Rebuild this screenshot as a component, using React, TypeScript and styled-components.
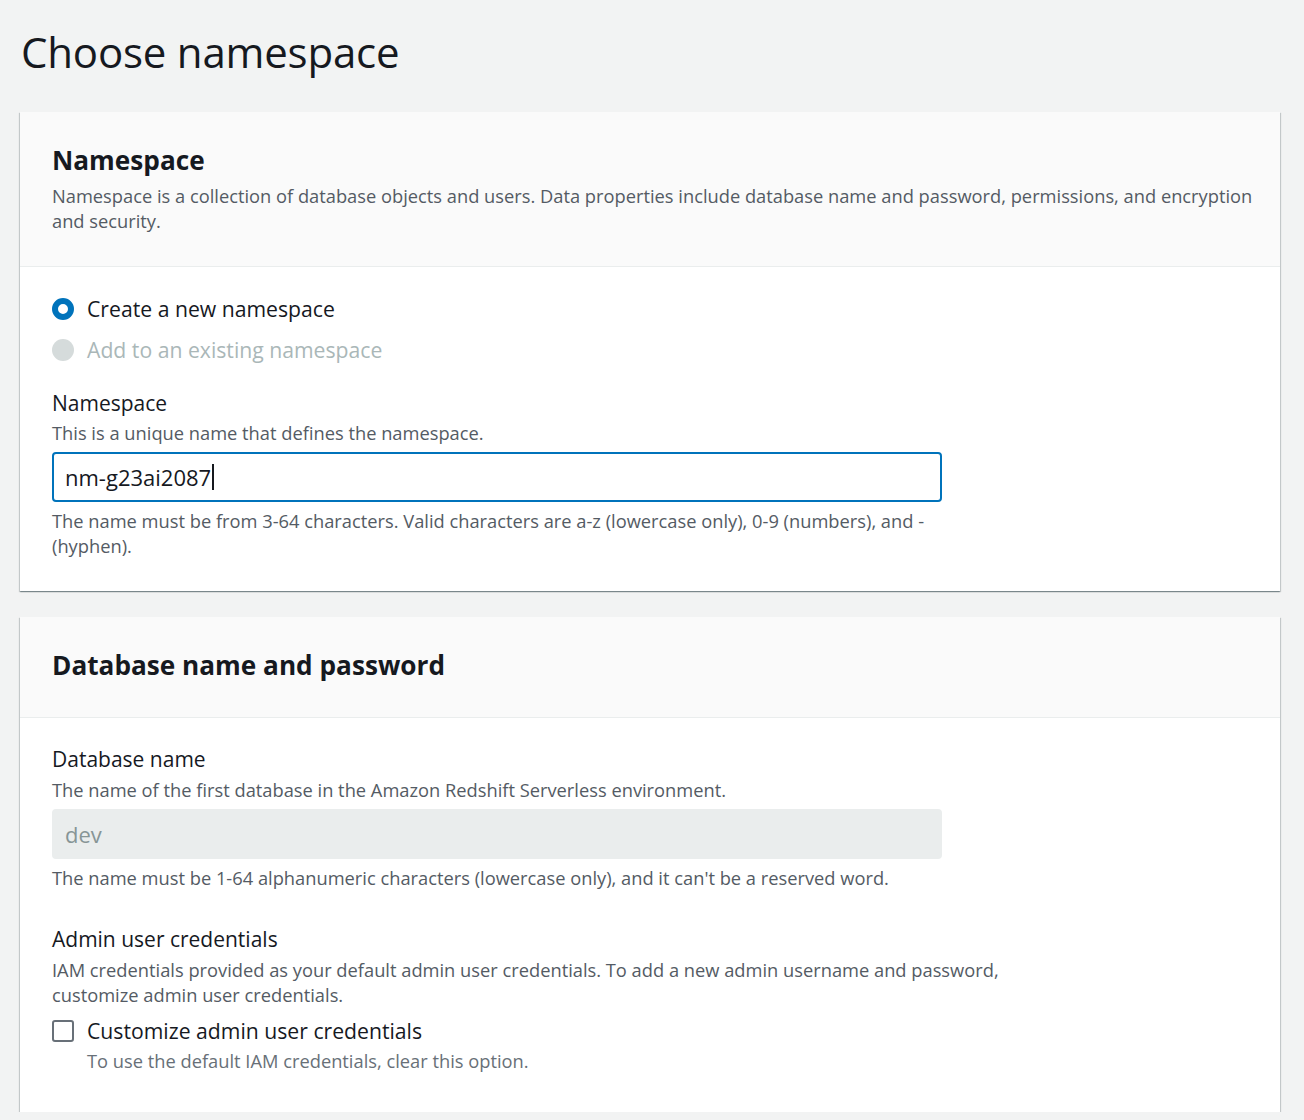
import React from "react";
import styled, { createGlobalStyle } from "styled-components";

const Global = createGlobalStyle`
  html, body { margin: 0; padding: 0; background: #f2f3f3; }
  body { font-family: "Open Sans", "Noto Sans", sans-serif; color: #16191f; }
  * { box-sizing: border-box; }
`;

const Page = styled.div`
  padding: 22px 24px 0 20px;
  display: flex;
  flex-direction: column;
`;

const Title = styled.h1`
  margin: 0 0 0 1px;
  font-size: 42px;
  font-weight: 400;
  line-height: 60px;
  color: #16191f;
  letter-spacing: -0.2px;
`;

const Stack = styled.div`
  margin-top: 30px;
  display: flex;
  flex-direction: column;
  gap: 26px;
`;

const Card = styled.section`
  background: #fff;
  box-shadow: 0 1px 1px 0 rgba(0, 28, 36, 0.3), 1px 1px 1px 0 rgba(0, 28, 36, 0.15),
    -1px 1px 1px 0 rgba(0, 28, 36, 0.15);
`;

const CardHeader = styled.header<{ $pb?: number }>`
  background: #fafafa;
  border-bottom: 1px solid #eaeded;
  padding: 30px 16px ${(p) => p.$pb ?? 33}px 32px;
`;

const CardTitle = styled.h2`
  margin: 0;
  font-size: 26.2px;
  font-weight: 700;
  line-height: 36px;
`;

const Desc = styled.p<{ $mt?: number }>`
  margin: ${(p) => p.$mt ?? 0}px 0 0;
  font-size: 18.3px;
  line-height: 25px;
  color: #545b64;
`;

const CardBody = styled.div<{ $pb?: number }>`
  padding: 27px 32px ${(p) => p.$pb ?? 33}px;
  display: flex;
  flex-direction: column;
`;

const RadioGroup = styled.div`
  display: flex;
  flex-direction: column;
  gap: 11px;
`;

const OptionRow = styled.label<{ $disabled?: boolean }>`
  display: flex;
  align-items: center;
  gap: 13px;
  font-size: 21.2px;
  line-height: 30px;
  color: ${(p) => (p.$disabled ? "#aab7b8" : "#16191f")};
`;

const RadioDot = styled.span<{ $checked?: boolean }>`
  width: 22px;
  height: 22px;
  border-radius: 50%;
  flex: none;
  background: ${(p) => (p.$checked ? "#fff" : "#d5dbdb")};
  border: ${(p) => (p.$checked ? "6px solid #0073bb" : "none")};
`;

const Field = styled.div<{ $mt: number }>`
  margin-top: ${(p) => p.$mt}px;
  display: flex;
  flex-direction: column;
`;

const Label = styled.div`
  font-size: 21px;
  line-height: 28px;
  color: #16191f;
`;

const Input = styled.div<{ $disabled?: boolean }>`
  margin-top: 7px;
  width: 890px;
  height: 50px;
  border-radius: 4px;
  display: flex;
  align-items: center;
  padding: 0 11px;
  font-size: 22px;
  background: ${(p) => (p.$disabled ? "#eaeded" : "#fff")};
  color: ${(p) => (p.$disabled ? "#879596" : "#16191f")};
  border: 2px solid ${(p) => (p.$disabled ? "#eaeded" : "#0073bb")};
`;

const Caret = styled.span`
  display: inline-block;
  width: 2px;
  height: 26px;
  background: #16191f;
  margin-left: 1px;
`;

const Constraint = styled.p`
  margin: 6px 0 0;
  max-width: 890px;
  font-size: 18.3px;
  line-height: 25px;
  color: #545b64;
`;

const CheckRow = styled.label`
  margin-top: 10px;
  display: flex;
  align-items: center;
  gap: 13px;
  font-size: 21.2px;
  line-height: 28px;
`;

const CheckBox = styled.span`
  width: 22px;
  height: 22px;
  flex: none;
  border: 2px solid #687078;
  border-radius: 3px;
  background: #fff;
`;

const SubText = styled.p`
  margin: 3px 0 0 35px;
  font-size: 18.3px;
  line-height: 25px;
  color: #687078;
`;

export default function App() {
  return (
    <>
      <Global />
      <Page>
        <Title>Choose namespace</Title>
        <Stack>
          <Card>
            <CardHeader>
              <CardTitle>Namespace</CardTitle>
              <Desc $mt={5}>
                Namespace is a collection of database objects and users. Data properties include database name and
                password, permissions, and encryption and security.
              </Desc>
            </CardHeader>
            <CardBody>
              <RadioGroup>
                <OptionRow>
                  <RadioDot $checked />
                  Create a new namespace
                </OptionRow>
                <OptionRow $disabled>
                  <RadioDot />
                  Add to an existing namespace
                </OptionRow>
              </RadioGroup>
              <Field $mt={24}>
                <Label>Namespace</Label>
                <Desc $mt={3}>This is a unique name that defines the namespace.</Desc>
                <Input>
                  nm-g23ai2087
                  <Caret />
                </Input>
                <Constraint>
                  The name must be from 3-64 characters. Valid characters are a-z (lowercase only), 0-9 (numbers), and -
                  (hyphen).
                </Constraint>
              </Field>
            </CardBody>
          </Card>
          <Card>
            <CardHeader $pb={34}>
              <CardTitle>Database name and password</CardTitle>
            </CardHeader>
            <CardBody $pb={39}>
              <Field $mt={0}>
                <Label>Database name</Label>
                <Desc $mt={4}>The name of the first database in the Amazon Redshift Serverless environment.</Desc>
                <Input $disabled>dev</Input>
                <Constraint>
                  The name must be 1-64 alphanumeric characters (lowercase only), and it can't be a reserved word.
                </Constraint>
              </Field>
              <Field $mt={35}>
                <Label>Admin user credentials</Label>
                <Desc $mt={4}>
                  IAM credentials provided as your default admin user credentials. To add a new admin username and
                  password,
                  <br />
                  customize admin user credentials.
                </Desc>
                <CheckRow>
                  <CheckBox />
                  Customize admin user credentials
                </CheckRow>
                <SubText>To use the default IAM credentials, clear this option.</SubText>
              </Field>
            </CardBody>
          </Card>
        </Stack>
      </Page>
    </>
  );
}
